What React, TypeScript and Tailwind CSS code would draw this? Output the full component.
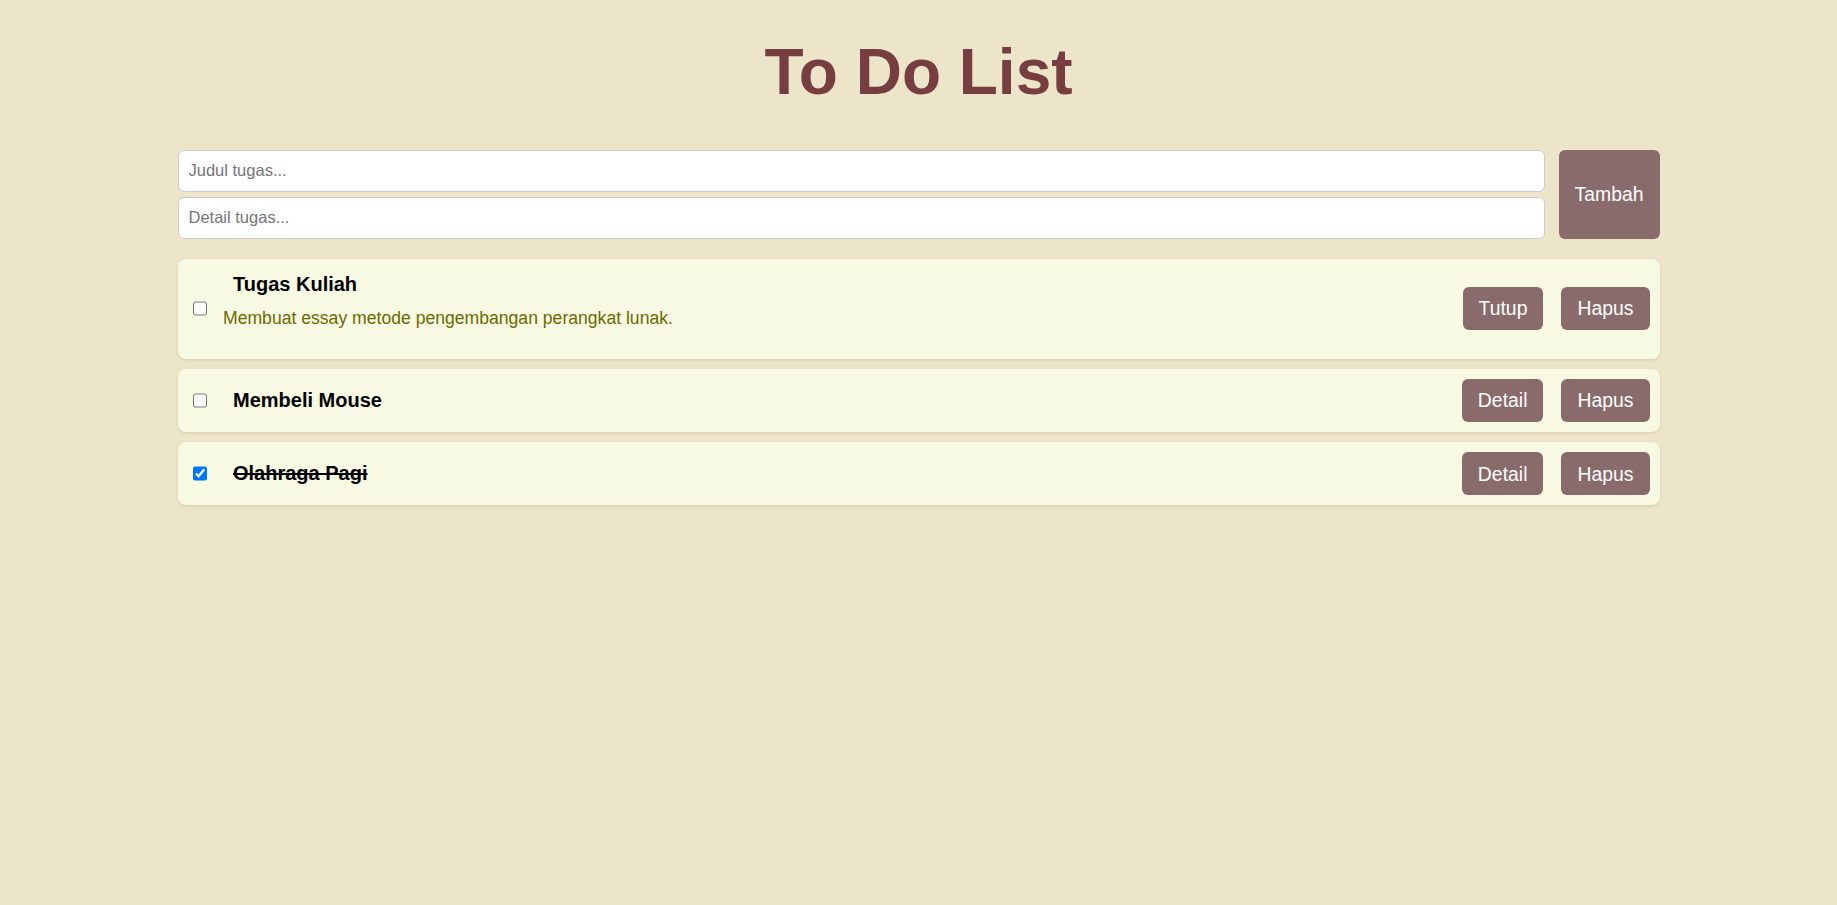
import React, { useState } from 'react';

interface Task {
  id: number;
  title: string;
  detail: string;
  done: boolean;
  open: boolean;
}

const initialTasks: Task[] = [
  { id: 1, title: 'Tugas Kuliah', detail: 'Membuat essay metode pengembangan perangkat lunak.', done: false, open: true },
  { id: 2, title: 'Membeli Mouse', detail: '', done: false, open: false },
  { id: 3, title: 'Olahraga Pagi', detail: '', done: true, open: false },
];

const btn = 'bg-[#8a6b6b] text-white text-[19.4px] leading-[1.15] px-[16px] py-[10.5px] rounded-[6px] cursor-pointer';

const App: React.FC = () => {
  const [tasks, setTasks] = useState<Task[]>(initialTasks);
  const [title, setTitle] = useState('');
  const [detail, setDetail] = useState('');

  const addTask = () => {
    if (!title.trim()) return;
    setTasks([...tasks, { id: Date.now(), title, detail, done: false, open: false }]);
    setTitle('');
    setDetail('');
  };

  const update = (id: number, patch: Partial<Task>) =>
    setTasks(tasks.map((t) => (t.id === id ? { ...t, ...patch } : t)));

  return (
    <div className="min-h-screen bg-[#ede5ca] pt-[36px] font-['Liberation_Sans',Arial,sans-serif]">
      <h1 className="text-center text-[64px] font-bold leading-[1.15] text-[#763e3e]">To Do List</h1>

      <div className="w-[1482px] mx-auto mt-[40px]">
        <div className="flex gap-[14px]">
          <div className="flex-1 flex flex-col gap-[5px]">
            <input
              value={title}
              onChange={(e) => setTitle(e.target.value)}
              placeholder="Judul tugas..."
              className="bg-white border border-[#cccccc] rounded-[6px] px-[10px] py-[10.5px] text-[16.5px] leading-[1.15] outline-none placeholder:text-[#757575]"
            />
            <input
              value={detail}
              onChange={(e) => setDetail(e.target.value)}
              placeholder="Detail tugas..."
              className="bg-white border border-[#cccccc] rounded-[6px] px-[10px] py-[10.5px] text-[16.5px] leading-[1.15] outline-none placeholder:text-[#757575]"
            />
          </div>
          <button onClick={addTask} className={`${btn} w-[101px]`}>
            Tambah
          </button>
        </div>

        <div className="mt-[20px] flex flex-col gap-[10px]">
          {tasks.map((t) => (
            <div
              key={t.id}
              className="flex items-center bg-[#f7f9e2] rounded-[8px] p-[10px] shadow-[0_1px_3px_rgba(120,100,60,0.2)]"
            >
              <input
                type="checkbox"
                checked={t.done}
                onChange={() => update(t.id, { done: !t.done })}
                className="ml-[5px] w-[14.5px] h-[14.5px] shrink-0"
              />
              <div className={`flex-1 ml-[16px] ${t.open ? 'pt-[4px] pb-[21px]' : ''}`}>
                <h3
                  className={`pl-[10px] text-[20px] font-bold leading-[1.15] text-black ${t.done ? 'line-through' : ''}`}
                >
                  {t.title}
                </h3>
                {t.open && (
                  <p className="mt-[12px] text-[17.6px] leading-[1.15] text-[#6b6b00]">{t.detail}</p>
                )}
              </div>
              <div className="flex gap-[18px]">
                <button onClick={() => update(t.id, { open: !t.open })} className={btn}>
                  {t.open ? 'Tutup' : 'Detail'}
                </button>
                <button onClick={() => setTasks(tasks.filter((x) => x.id !== t.id))} className={btn}>
                  Hapus
                </button>
              </div>
            </div>
          ))}
        </div>
      </div>
    </div>
  );
};

export default App;
